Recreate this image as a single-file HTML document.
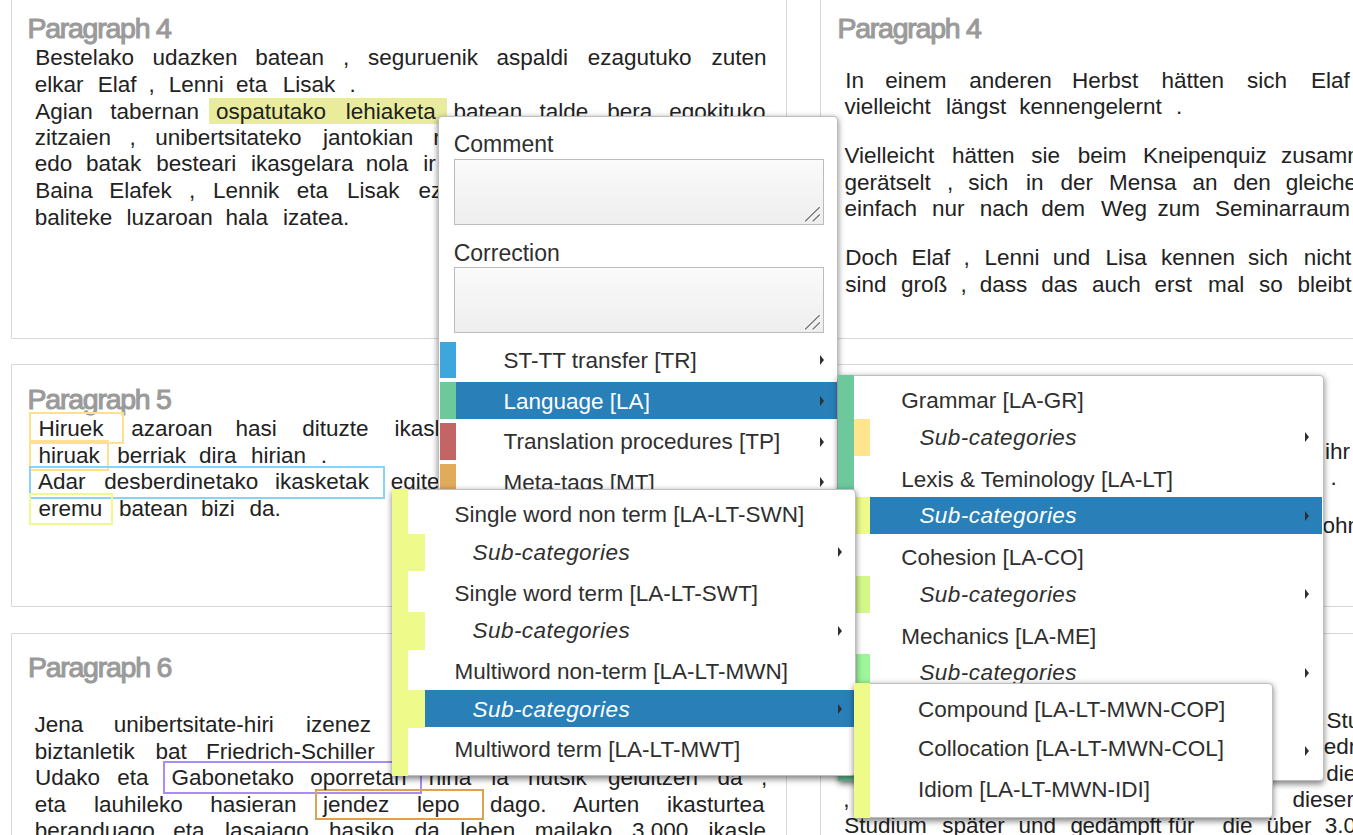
<!DOCTYPE html>
<html><head><meta charset="utf-8"><style>
html,body{margin:0;padding:0;width:1353px;height:835px;overflow:hidden;background:#fff;position:relative}
body{font-family:"Liberation Sans",sans-serif}
.w{position:absolute;white-space:pre;font-family:"Liberation Sans",sans-serif}
</style></head><body>
<div style="position:absolute;left:10.6px;top:-6.0px;width:776.0px;height:344.5px;border:1px solid #d8d8d8;box-sizing:border-box;border-radius:1px"></div>
<div style="position:absolute;left:10.6px;top:364.3px;width:776.0px;height:242.8px;border:1px solid #d8d8d8;box-sizing:border-box;border-radius:1px"></div>
<div style="position:absolute;left:10.6px;top:632.9px;width:776.0px;height:300.0px;border:1px solid #d8d8d8;box-sizing:border-box;border-radius:1px"></div>
<div style="position:absolute;left:820.0px;top:-6.0px;width:776.0px;height:344.5px;border:1px solid #d8d8d8;box-sizing:border-box;border-radius:1px"></div>
<div style="position:absolute;left:820.0px;top:364.3px;width:776.0px;height:242.8px;border:1px solid #d8d8d8;box-sizing:border-box;border-radius:1px"></div>
<div style="position:absolute;left:820.0px;top:632.9px;width:776.0px;height:300.0px;border:1px solid #d8d8d8;box-sizing:border-box;border-radius:1px"></div>
<span class="w" style="left:27.4px;top:13.8px;font-size:28.5px;line-height:28.5px;color:#9a9a9a;letter-spacing:-1.25px;-webkit-text-stroke:1.05px #9a9a9a;">Paragraph 4</span>
<span class="w" style="left:27.6px;top:385.1px;font-size:28.5px;line-height:28.5px;color:#9a9a9a;letter-spacing:-1.25px;-webkit-text-stroke:1.05px #9a9a9a;">Paragraph 5</span>
<span class="w" style="left:27.9px;top:653.3px;font-size:28.5px;line-height:28.5px;color:#9a9a9a;letter-spacing:-1.25px;-webkit-text-stroke:1.05px #9a9a9a;">Paragraph 6</span>
<span class="w" style="left:837.5px;top:13.8px;font-size:28.5px;line-height:28.5px;color:#9a9a9a;letter-spacing:-1.25px;-webkit-text-stroke:1.05px #9a9a9a;">Paragraph 4</span>
<div style="position:absolute;left:209.4px;top:98.0px;width:237.3px;height:26.3px;background:#e9ed9b"></div>
<div style="position:absolute;left:29.0px;top:412.4px;width:95.2px;height:31.9px;border:2px solid #ffe08c;box-sizing:border-box"></div>
<div style="position:absolute;left:29.0px;top:439.5px;width:80.2px;height:31.4px;border:2px solid #ffe08c;box-sizing:border-box"></div>
<div style="position:absolute;left:29.0px;top:465.9px;width:356.0px;height:32.9px;border:2px solid #88d4f8;box-sizing:border-box"></div>
<div style="position:absolute;left:29.0px;top:493.4px;width:83.8px;height:31.9px;border:2px solid #eefa8c;box-sizing:border-box"></div>
<div style="position:absolute;left:162.6px;top:761.4px;width:259.9px;height:32.3px;border:2px solid #a98cfa;box-sizing:border-box"></div>
<div style="position:absolute;left:315.2px;top:789.0px;width:168.6px;height:31.0px;border:2px solid #dca24e;box-sizing:border-box"></div>
<span class="w" style="left:35.2px;top:47.1px;font-size:22.5px;line-height:22.5px;color:#222;">Bestelako</span>
<span class="w" style="left:152.4px;top:47.1px;font-size:22.5px;line-height:22.5px;color:#222;">udazken</span>
<span class="w" style="left:255.2px;top:47.1px;font-size:22.5px;line-height:22.5px;color:#222;">batean</span>
<span class="w" style="left:342.9px;top:47.1px;font-size:22.5px;line-height:22.5px;color:#222;">,</span>
<span class="w" style="left:367.9px;top:47.1px;font-size:22.5px;line-height:22.5px;color:#222;">seguruenik</span>
<span class="w" style="left:496.6px;top:47.1px;font-size:22.5px;line-height:22.5px;color:#222;">aspaldi</span>
<span class="w" style="left:587.7px;top:47.1px;font-size:22.5px;line-height:22.5px;color:#222;">ezagutuko</span>
<span class="w" style="left:711.6px;top:47.1px;font-size:22.5px;line-height:22.5px;color:#222;">zuten</span>
<span class="w" style="left:34.8px;top:73.8px;font-size:22.5px;line-height:22.5px;color:#222;">elkar</span>
<span class="w" style="left:97.7px;top:73.8px;font-size:22.5px;line-height:22.5px;color:#222;">Elaf</span>
<span class="w" style="left:148.6px;top:73.8px;font-size:22.5px;line-height:22.5px;color:#222;">,</span>
<span class="w" style="left:168.8px;top:73.8px;font-size:22.5px;line-height:22.5px;color:#222;">Lenni</span>
<span class="w" style="left:236.0px;top:73.8px;font-size:22.5px;line-height:22.5px;color:#222;">eta</span>
<span class="w" style="left:282.7px;top:73.8px;font-size:22.5px;line-height:22.5px;color:#222;">Lisak</span>
<span class="w" style="left:349.6px;top:73.8px;font-size:22.5px;line-height:22.5px;color:#222;">.</span>
<span class="w" style="left:35.2px;top:100.5px;font-size:22.5px;line-height:22.5px;color:#222;">Agian</span>
<span class="w" style="left:110.2px;top:100.5px;font-size:22.5px;line-height:22.5px;color:#222;">tabernan</span>
<span class="w" style="left:215.9px;top:100.5px;font-size:22.5px;line-height:22.5px;color:#222;">ospatutako</span>
<span class="w" style="left:345.8px;top:100.5px;font-size:22.5px;line-height:22.5px;color:#222;">lehiaketa</span>
<span class="w" style="left:453.4px;top:100.5px;font-size:22.5px;line-height:22.5px;color:#222;">batean</span>
<span class="w" style="left:539.6px;top:100.5px;font-size:22.5px;line-height:22.5px;color:#222;">talde</span>
<span class="w" style="left:607.3px;top:100.5px;font-size:22.5px;line-height:22.5px;color:#222;">bera</span>
<span class="w" style="left:669.3px;top:100.5px;font-size:22.5px;line-height:22.5px;color:#222;">egokituko</span>
<span class="w" style="left:34.8px;top:127.2px;font-size:22.5px;line-height:22.5px;color:#222;">zitzaien</span>
<span class="w" style="left:129.4px;top:127.2px;font-size:22.5px;line-height:22.5px;color:#222;">,</span>
<span class="w" style="left:155.3px;top:127.2px;font-size:22.5px;line-height:22.5px;color:#222;">unibertsitateko</span>
<span class="w" style="left:323.1px;top:127.2px;font-size:22.5px;line-height:22.5px;color:#222;">jantokian</span>
<span class="w" style="left:433.3px;top:127.2px;font-size:22.5px;line-height:22.5px;color:#222;">r</span>
<span class="w" style="left:34.8px;top:153.1px;font-size:22.5px;line-height:22.5px;color:#222;">edo</span>
<span class="w" style="left:86.1px;top:153.1px;font-size:22.5px;line-height:22.5px;color:#222;">batak</span>
<span class="w" style="left:156.3px;top:153.1px;font-size:22.5px;line-height:22.5px;color:#222;">besteari</span>
<span class="w" style="left:250.9px;top:153.1px;font-size:22.5px;line-height:22.5px;color:#222;">ikasgelara</span>
<span class="w" style="left:365.8px;top:153.1px;font-size:22.5px;line-height:22.5px;color:#222;">nola</span>
<span class="w" style="left:423.2px;top:153.1px;font-size:22.5px;line-height:22.5px;color:#222;">ir</span>
<span class="w" style="left:35.2px;top:180.0px;font-size:22.5px;line-height:22.5px;color:#222;">Baina</span>
<span class="w" style="left:109.2px;top:180.0px;font-size:22.5px;line-height:22.5px;color:#222;">Elafek</span>
<span class="w" style="left:189.0px;top:180.0px;font-size:22.5px;line-height:22.5px;color:#222;">,</span>
<span class="w" style="left:213.0px;top:180.0px;font-size:22.5px;line-height:22.5px;color:#222;">Lennik</span>
<span class="w" style="left:296.7px;top:180.0px;font-size:22.5px;line-height:22.5px;color:#222;">eta</span>
<span class="w" style="left:347.1px;top:180.0px;font-size:22.5px;line-height:22.5px;color:#222;">Lisak</span>
<span class="w" style="left:418.5px;top:180.0px;font-size:22.5px;line-height:22.5px;color:#222;">ez</span>
<span class="w" style="left:34.8px;top:206.9px;font-size:22.5px;line-height:22.5px;color:#222;">baliteke</span>
<span class="w" style="left:126.5px;top:206.9px;font-size:22.5px;line-height:22.5px;color:#222;">luzaroan</span>
<span class="w" style="left:225.5px;top:206.9px;font-size:22.5px;line-height:22.5px;color:#222;">hala</span>
<span class="w" style="left:282.9px;top:206.9px;font-size:22.5px;line-height:22.5px;color:#222;">izatea.</span>
<span class="w" style="left:38.5px;top:418.0px;font-size:22.5px;line-height:22.5px;color:#222;">Hiruek</span>
<span class="w" style="left:131.3px;top:418.0px;font-size:22.5px;line-height:22.5px;color:#222;">azaroan</span>
<span class="w" style="left:235.5px;top:418.0px;font-size:22.5px;line-height:22.5px;color:#222;">hasi</span>
<span class="w" style="left:302.2px;top:418.0px;font-size:22.5px;line-height:22.5px;color:#222;">dituzte</span>
<span class="w" style="left:394.6px;top:418.0px;font-size:22.5px;line-height:22.5px;color:#222;">ikasle</span>
<span class="w" style="left:38.5px;top:444.5px;font-size:22.5px;line-height:22.5px;color:#222;">hiruak</span>
<span class="w" style="left:117.3px;top:444.5px;font-size:22.5px;line-height:22.5px;color:#222;">berriak</span>
<span class="w" style="left:199.1px;top:444.5px;font-size:22.5px;line-height:22.5px;color:#222;">dira</span>
<span class="w" style="left:251.0px;top:444.5px;font-size:22.5px;line-height:22.5px;color:#222;">hirian</span>
<span class="w" style="left:320.8px;top:444.5px;font-size:22.5px;line-height:22.5px;color:#222;">.</span>
<span class="w" style="left:37.9px;top:470.8px;font-size:22.5px;line-height:22.5px;color:#222;">Adar</span>
<span class="w" style="left:104.3px;top:470.8px;font-size:22.5px;line-height:22.5px;color:#222;">desberdinetako</span>
<span class="w" style="left:275.1px;top:470.8px;font-size:22.5px;line-height:22.5px;color:#222;">ikasketak</span>
<span class="w" style="left:390.7px;top:470.8px;font-size:22.5px;line-height:22.5px;color:#222;">egiten</span>
<span class="w" style="left:38.5px;top:498.0px;font-size:22.5px;line-height:22.5px;color:#222;">eremu</span>
<span class="w" style="left:118.9px;top:498.0px;font-size:22.5px;line-height:22.5px;color:#222;">batean</span>
<span class="w" style="left:201.1px;top:498.0px;font-size:22.5px;line-height:22.5px;color:#222;">bizi</span>
<span class="w" style="left:249.5px;top:498.0px;font-size:22.5px;line-height:22.5px;color:#222;">da.</span>
<span class="w" style="left:34.4px;top:714.2px;font-size:22.5px;line-height:22.5px;color:#222;">Jena</span>
<span class="w" style="left:113.8px;top:714.2px;font-size:22.5px;line-height:22.5px;color:#222;">unibertsitate-hiri</span>
<span class="w" style="left:305.9px;top:714.2px;font-size:22.5px;line-height:22.5px;color:#222;">izenez</span>
<span class="w" style="left:34.7px;top:740.7px;font-size:22.5px;line-height:22.5px;color:#222;">biztanletik</span>
<span class="w" style="left:155.4px;top:740.7px;font-size:22.5px;line-height:22.5px;color:#222;">bat</span>
<span class="w" style="left:206.0px;top:740.7px;font-size:22.5px;line-height:22.5px;color:#222;">Friedrich-Schiller</span>
<span class="w" style="left:34.9px;top:767.2px;font-size:22.5px;line-height:22.5px;color:#222;">Udako</span>
<span class="w" style="left:117.2px;top:767.2px;font-size:22.5px;line-height:22.5px;color:#222;">eta</span>
<span class="w" style="left:171.4px;top:767.2px;font-size:22.5px;line-height:22.5px;color:#222;">Gabonetako</span>
<span class="w" style="left:310.3px;top:767.2px;font-size:22.5px;line-height:22.5px;color:#222;">oporretan</span>
<span class="w" style="left:428.8px;top:767.2px;font-size:22.5px;line-height:22.5px;color:#222;">hiria</span>
<span class="w" style="left:491.3px;top:767.2px;font-size:22.5px;line-height:22.5px;color:#222;">ia</span>
<span class="w" style="left:528.1px;top:767.2px;font-size:22.5px;line-height:22.5px;color:#222;">hutsik</span>
<span class="w" style="left:608.0px;top:767.2px;font-size:22.5px;line-height:22.5px;color:#222;">gelditzen</span>
<span class="w" style="left:717.4px;top:767.2px;font-size:22.5px;line-height:22.5px;color:#222;">da</span>
<span class="w" style="left:760.9px;top:767.2px;font-size:22.5px;line-height:22.5px;color:#222;">,</span>
<span class="w" style="left:34.7px;top:793.6px;font-size:22.5px;line-height:22.5px;color:#222;">eta</span>
<span class="w" style="left:93.9px;top:793.6px;font-size:22.5px;line-height:22.5px;color:#222;">lauhileko</span>
<span class="w" style="left:210.2px;top:793.6px;font-size:22.5px;line-height:22.5px;color:#222;">hasieran</span>
<span class="w" style="left:323.0px;top:793.6px;font-size:22.5px;line-height:22.5px;color:#222;">jendez</span>
<span class="w" style="left:417.1px;top:793.6px;font-size:22.5px;line-height:22.5px;color:#222;">lepo</span>
<span class="w" style="left:490.1px;top:793.6px;font-size:22.5px;line-height:22.5px;color:#222;">dago.</span>
<span class="w" style="left:573.1px;top:793.6px;font-size:22.5px;line-height:22.5px;color:#222;">Aurten</span>
<span class="w" style="left:667.0px;top:793.6px;font-size:22.5px;line-height:22.5px;color:#222;">ikasturtea</span>
<span class="w" style="left:34.7px;top:820.2px;font-size:22.5px;line-height:22.5px;color:#222;">beranduago</span>
<span class="w" style="left:173.3px;top:820.2px;font-size:22.5px;line-height:22.5px;color:#222;">eta</span>
<span class="w" style="left:225.0px;top:820.2px;font-size:22.5px;line-height:22.5px;color:#222;">lasaiago</span>
<span class="w" style="left:328.9px;top:820.2px;font-size:22.5px;line-height:22.5px;color:#222;">hasiko</span>
<span class="w" style="left:414.8px;top:820.2px;font-size:22.5px;line-height:22.5px;color:#222;">da</span>
<span class="w" style="left:460.3px;top:820.2px;font-size:22.5px;line-height:22.5px;color:#222;">lehen</span>
<span class="w" style="left:534.8px;top:820.2px;font-size:22.5px;line-height:22.5px;color:#222;">mailako</span>
<span class="w" style="left:632.0px;top:820.2px;font-size:22.5px;line-height:22.5px;color:#222;">3.000</span>
<span class="w" style="left:708.6px;top:820.2px;font-size:22.5px;line-height:22.5px;color:#222;">ikasle</span>
<span class="w" style="left:845.2px;top:69.6px;font-size:22.5px;line-height:22.5px;color:#222;">In</span>
<span class="w" style="left:885.2px;top:69.6px;font-size:22.5px;line-height:22.5px;color:#222;">einem</span>
<span class="w" style="left:969.2px;top:69.6px;font-size:22.5px;line-height:22.5px;color:#222;">anderen</span>
<span class="w" style="left:1072.0px;top:69.6px;font-size:22.5px;line-height:22.5px;color:#222;">Herbst</span>
<span class="w" style="left:1161.4px;top:69.6px;font-size:22.5px;line-height:22.5px;color:#222;">hätten</span>
<span class="w" style="left:1246.9px;top:69.6px;font-size:22.5px;line-height:22.5px;color:#222;">sich</span>
<span class="w" style="left:1311.1px;top:69.6px;font-size:22.5px;line-height:22.5px;color:#222;">Elaf</span>
<span class="w" style="left:844.5px;top:95.6px;font-size:22.5px;line-height:22.5px;color:#222;">vielleicht</span>
<span class="w" style="left:946.1px;top:95.6px;font-size:22.5px;line-height:22.5px;color:#222;">längst</span>
<span class="w" style="left:1019.2px;top:95.6px;font-size:22.5px;line-height:22.5px;color:#222;">kennengelernt</span>
<span class="w" style="left:1176.0px;top:95.6px;font-size:22.5px;line-height:22.5px;color:#222;">.</span>
<span class="w" style="left:844.5px;top:144.9px;font-size:22.5px;line-height:22.5px;color:#222;">Vielleicht</span>
<span class="w" style="left:951.9px;top:144.9px;font-size:22.5px;line-height:22.5px;color:#222;">hätten</span>
<span class="w" style="left:1031.2px;top:144.9px;font-size:22.5px;line-height:22.5px;color:#222;">sie</span>
<span class="w" style="left:1077.7px;top:144.9px;font-size:22.5px;line-height:22.5px;color:#222;">beim</span>
<span class="w" style="left:1142.9px;top:144.9px;font-size:22.5px;line-height:22.5px;color:#222;">Kneipenquiz</span>
<span class="w" style="left:1281.0px;top:144.9px;font-size:22.5px;line-height:22.5px;color:#222;">zusammen</span>
<span class="w" style="left:844.5px;top:171.6px;font-size:22.5px;line-height:22.5px;color:#222;">gerätselt</span>
<span class="w" style="left:947.1px;top:171.6px;font-size:22.5px;line-height:22.5px;color:#222;">,</span>
<span class="w" style="left:968.2px;top:171.6px;font-size:22.5px;line-height:22.5px;color:#222;">sich</span>
<span class="w" style="left:1025.9px;top:171.6px;font-size:22.5px;line-height:22.5px;color:#222;">in</span>
<span class="w" style="left:1060.5px;top:171.6px;font-size:22.5px;line-height:22.5px;color:#222;">der</span>
<span class="w" style="left:1108.9px;top:171.6px;font-size:22.5px;line-height:22.5px;color:#222;">Mensa</span>
<span class="w" style="left:1192.5px;top:171.6px;font-size:22.5px;line-height:22.5px;color:#222;">an</span>
<span class="w" style="left:1233.3px;top:171.6px;font-size:22.5px;line-height:22.5px;color:#222;">den</span>
<span class="w" style="left:1285.8px;top:171.6px;font-size:22.5px;line-height:22.5px;color:#222;">gleichen</span>
<span class="w" style="left:844.5px;top:197.6px;font-size:22.5px;line-height:22.5px;color:#222;">einfach</span>
<span class="w" style="left:932.1px;top:197.6px;font-size:22.5px;line-height:22.5px;color:#222;">nur</span>
<span class="w" style="left:979.7px;top:197.6px;font-size:22.5px;line-height:22.5px;color:#222;">nach</span>
<span class="w" style="left:1041.2px;top:197.6px;font-size:22.5px;line-height:22.5px;color:#222;">dem</span>
<span class="w" style="left:1101.1px;top:197.6px;font-size:22.5px;line-height:22.5px;color:#222;">Weg</span>
<span class="w" style="left:1157.5px;top:197.6px;font-size:22.5px;line-height:22.5px;color:#222;">zum</span>
<span class="w" style="left:1214.9px;top:197.6px;font-size:22.5px;line-height:22.5px;color:#222;">Seminarraum</span>
<span class="w" style="left:845.2px;top:247.3px;font-size:22.5px;line-height:22.5px;color:#222;">Doch</span>
<span class="w" style="left:911.5px;top:247.3px;font-size:22.5px;line-height:22.5px;color:#222;">Elaf</span>
<span class="w" style="left:963.4px;top:247.3px;font-size:22.5px;line-height:22.5px;color:#222;">,</span>
<span class="w" style="left:984.5px;top:247.3px;font-size:22.5px;line-height:22.5px;color:#222;">Lenni</span>
<span class="w" style="left:1052.8px;top:247.3px;font-size:22.5px;line-height:22.5px;color:#222;">und</span>
<span class="w" style="left:1105.6px;top:247.3px;font-size:22.5px;line-height:22.5px;color:#222;">Lisa</span>
<span class="w" style="left:1161.1px;top:247.3px;font-size:22.5px;line-height:22.5px;color:#222;">kennen</span>
<span class="w" style="left:1248.1px;top:247.3px;font-size:22.5px;line-height:22.5px;color:#222;">sich</span>
<span class="w" style="left:1303.8px;top:247.3px;font-size:22.5px;line-height:22.5px;color:#222;">nicht</span>
<span class="w" style="left:845.2px;top:273.5px;font-size:22.5px;line-height:22.5px;color:#222;">sind</span>
<span class="w" style="left:901.0px;top:273.5px;font-size:22.5px;line-height:22.5px;color:#222;">groß</span>
<span class="w" style="left:960.5px;top:273.5px;font-size:22.5px;line-height:22.5px;color:#222;">,</span>
<span class="w" style="left:979.7px;top:273.5px;font-size:22.5px;line-height:22.5px;color:#222;">dass</span>
<span class="w" style="left:1041.2px;top:273.5px;font-size:22.5px;line-height:22.5px;color:#222;">das</span>
<span class="w" style="left:1092.1px;top:273.5px;font-size:22.5px;line-height:22.5px;color:#222;">auch</span>
<span class="w" style="left:1154.6px;top:273.5px;font-size:22.5px;line-height:22.5px;color:#222;">erst</span>
<span class="w" style="left:1207.9px;top:273.5px;font-size:22.5px;line-height:22.5px;color:#222;">mal</span>
<span class="w" style="left:1258.9px;top:273.5px;font-size:22.5px;line-height:22.5px;color:#222;">so</span>
<span class="w" style="left:1297.6px;top:273.5px;font-size:22.5px;line-height:22.5px;color:#222;">bleibt</span>
<span class="w" style="left:1325.0px;top:440.7px;font-size:22.5px;line-height:22.5px;color:#222;">ihr</span>
<span class="w" style="left:1330.5px;top:467.4px;font-size:22.5px;line-height:22.5px;color:#222;">.</span>
<span class="w" style="left:1322.5px;top:515.0px;font-size:22.5px;line-height:22.5px;color:#222;">ohne</span>
<span class="w" style="left:1326.5px;top:709.9px;font-size:22.5px;line-height:22.5px;color:#222;">Studium</span>
<span class="w" style="left:1323.8px;top:736.3px;font-size:22.5px;line-height:22.5px;color:#222;">edrich</span>
<span class="w" style="left:1326.3px;top:763.2px;font-size:22.5px;line-height:22.5px;color:#222;">dieser</span>
<span class="w" style="left:843.3px;top:789.4px;font-size:22.5px;line-height:22.5px;color:#222;">,</span>
<span class="w" style="left:1292.6px;top:789.4px;font-size:22.5px;line-height:22.5px;color:#222;">dieser</span>
<span class="w" style="left:844.3px;top:814.5px;font-size:22.5px;line-height:22.5px;color:#222;">Studium</span>
<span class="w" style="left:942.2px;top:814.5px;font-size:22.5px;line-height:22.5px;color:#222;">später</span>
<span class="w" style="left:1018.5px;top:814.5px;font-size:22.5px;line-height:22.5px;color:#222;">und</span>
<span class="w" style="left:1070.5px;top:814.5px;font-size:22.5px;line-height:22.5px;color:#222;"><span style="letter-spacing:-0.4px">gedämpft</span></span>
<span class="w" style="left:1168.2px;top:814.5px;font-size:22.5px;line-height:22.5px;color:#222;">für</span>
<span class="w" style="left:1222.6px;top:814.5px;font-size:22.5px;line-height:22.5px;color:#222;">die</span>
<span class="w" style="left:1266.4px;top:814.5px;font-size:22.5px;line-height:22.5px;color:#222;">über</span>
<span class="w" style="left:1324.7px;top:814.5px;font-size:22.5px;line-height:22.5px;color:#222;">3.000</span>
<div style="position:absolute;left:0;top:0;z-index:1">
<div style="position:absolute;left:437.9px;top:116.1px;width:400.1px;height:420.0px;background:#fff;border:1px solid #bebebe;box-sizing:border-box;border-radius:4px;box-shadow:0 2.5px 6px rgba(0,0,0,.5);"></div>
<span class="w" style="left:453.7px;top:132.8px;font-size:23px;line-height:23px;color:#2f2f2f;">Comment</span>
<div style="position:absolute;left:454.2px;top:159.0px;width:369.6px;height:66.2px;border:1px solid #bcbcbc;box-sizing:border-box;background:linear-gradient(#fafafa,#eeeeee)"></div>
<span class="w" style="left:453.7px;top:241.8px;font-size:23px;line-height:23px;color:#2f2f2f;">Correction</span>
<div style="position:absolute;left:454.2px;top:267.0px;width:369.6px;height:66.2px;border:1px solid #bcbcbc;box-sizing:border-box;background:linear-gradient(#fafafa,#eeeeee)"></div>
<svg style="position:absolute;left:800px;top:199.5px" width="24" height="26" viewBox="0 0 24 26"><path d="M5.5 21.1 L19.3 7.4 M13 21.1 L19.5 14.8" stroke="#fff" stroke-width="3.2" stroke-linecap="round" opacity=".8"/><path d="M5.5 21.1 L19.3 7.4 M13 21.1 L19.5 14.8" stroke="#777" stroke-width="1.4" stroke-linecap="round"/></svg>
<svg style="position:absolute;left:800px;top:307.5px" width="24" height="26" viewBox="0 0 24 26"><path d="M5.5 21.1 L19.3 7.4 M13 21.1 L19.5 14.8" stroke="#fff" stroke-width="3.2" stroke-linecap="round" opacity=".8"/><path d="M5.5 21.1 L19.3 7.4 M13 21.1 L19.5 14.8" stroke="#777" stroke-width="1.4" stroke-linecap="round"/></svg>
<div style="position:absolute;left:439.5px;top:341.6px;width:16.5px;height:36.6px;background:#3ba7dd"></div>
<span class="w" style="left:503.5px;top:349.8px;font-size:22.5px;line-height:22.5px;color:#2f2f2f;">ST-TT transfer [TR]</span>
<div style="position:absolute;left:819.7px;top:354.9px;width:0;height:0;border-style:solid;border-width:5.7px 0 5.7px 4.8px;border-color:transparent transparent transparent #2f2f2f"></div>
<div style="position:absolute;left:439.5px;top:382.4px;width:16.5px;height:36.6px;background:#6dc89b"></div>
<div style="position:absolute;left:456.0px;top:382.4px;width:381.0px;height:36.6px;background:#2980b9"></div>
<span class="w" style="left:503.5px;top:390.6px;font-size:22.5px;line-height:22.5px;color:#fff;">Language [LA]</span>
<div style="position:absolute;left:819.7px;top:395.7px;width:0;height:0;border-style:solid;border-width:5.7px 0 5.7px 4.8px;border-color:transparent transparent transparent #2f2f2f"></div>
<div style="position:absolute;left:439.5px;top:423.2px;width:16.5px;height:36.6px;background:#c46565"></div>
<span class="w" style="left:503.5px;top:431.4px;font-size:22.5px;line-height:22.5px;color:#2f2f2f;">Translation procedures [TP]</span>
<div style="position:absolute;left:819.7px;top:436.5px;width:0;height:0;border-style:solid;border-width:5.7px 0 5.7px 4.8px;border-color:transparent transparent transparent #2f2f2f"></div>
<div style="position:absolute;left:439.5px;top:464.0px;width:16.5px;height:36.6px;background:#e0ac5c"></div>
<span class="w" style="left:503.5px;top:472.2px;font-size:22.5px;line-height:22.5px;color:#2f2f2f;">Meta-tags [MT]</span>
<div style="position:absolute;left:819.7px;top:477.3px;width:0;height:0;border-style:solid;border-width:5.7px 0 5.7px 4.8px;border-color:transparent transparent transparent #2f2f2f"></div>
<div style="position:absolute;left:439.5px;top:504.8px;width:16.5px;height:36.6px;background:#999"></div>
<span class="w" style="left:503.5px;top:513.0px;font-size:22.5px;line-height:22.5px;color:#2f2f2f;">Other [OT]</span>
<div style="position:absolute;left:819.7px;top:518.1px;width:0;height:0;border-style:solid;border-width:5.7px 0 5.7px 4.8px;border-color:transparent transparent transparent #2f2f2f"></div>
</div>
<div style="position:absolute;left:0;top:0;z-index:2">
<div style="position:absolute;left:838.0px;top:375.0px;width:485.5px;height:406.0px;background:#fff;border:1px solid #bebebe;box-sizing:border-box;border-radius:4px;box-shadow:0 2.5px 6px rgba(0,0,0,.5);"></div>
<div style="position:absolute;left:838.0px;top:375.0px;width:16.0px;height:406.0px;background:#6dc89b"></div>
<span class="w" style="left:901.2px;top:390.4px;font-size:22.5px;line-height:22.5px;color:#2f2f2f;">Grammar [LA-GR]</span>
<div style="position:absolute;left:854.0px;top:418.8px;width:16.2px;height:37.0px;background:#ffe68e"></div>
<span class="w" style="left:919.4px;top:426.8px;font-size:22.5px;line-height:22.5px;color:#2f2f2f;font-style:italic;letter-spacing:0.45px">Sub-categories</span>
<div style="position:absolute;left:1305.4px;top:432.1px;width:0;height:0;border-style:solid;border-width:5.7px 0 5.7px 4.8px;border-color:transparent transparent transparent #2f2f2f"></div>
<span class="w" style="left:901.2px;top:468.9px;font-size:22.5px;line-height:22.5px;color:#2f2f2f;">Lexis &amp; Teminology [LA-LT]</span>
<div style="position:absolute;left:854.0px;top:497.3px;width:16.2px;height:37.0px;background:#eefa8a"></div>
<div style="position:absolute;left:870.2px;top:497.3px;width:452.3px;height:36.6px;background:#2980b9"></div>
<span class="w" style="left:919.4px;top:505.3px;font-size:22.5px;line-height:22.5px;color:#fff;font-style:italic;letter-spacing:0.45px">Sub-categories</span>
<div style="position:absolute;left:1305.4px;top:510.6px;width:0;height:0;border-style:solid;border-width:5.7px 0 5.7px 4.8px;border-color:transparent transparent transparent #2f2f2f"></div>
<span class="w" style="left:901.2px;top:547.4px;font-size:22.5px;line-height:22.5px;color:#2f2f2f;">Cohesion [LA-CO]</span>
<div style="position:absolute;left:854.0px;top:575.8px;width:16.2px;height:37.0px;background:#d4f78a"></div>
<span class="w" style="left:919.4px;top:583.8px;font-size:22.5px;line-height:22.5px;color:#2f2f2f;font-style:italic;letter-spacing:0.45px">Sub-categories</span>
<div style="position:absolute;left:1305.4px;top:589.1px;width:0;height:0;border-style:solid;border-width:5.7px 0 5.7px 4.8px;border-color:transparent transparent transparent #2f2f2f"></div>
<span class="w" style="left:901.2px;top:625.9px;font-size:22.5px;line-height:22.5px;color:#2f2f2f;">Mechanics [LA-ME]</span>
<div style="position:absolute;left:854.0px;top:654.3px;width:16.2px;height:37.0px;background:#9ef59a"></div>
<span class="w" style="left:919.4px;top:662.3px;font-size:22.5px;line-height:22.5px;color:#2f2f2f;font-style:italic;letter-spacing:0.45px">Sub-categories</span>
<div style="position:absolute;left:1305.4px;top:667.6px;width:0;height:0;border-style:solid;border-width:5.7px 0 5.7px 4.8px;border-color:transparent transparent transparent #2f2f2f"></div>
<span class="w" style="left:901.2px;top:704.4px;font-size:22.5px;line-height:22.5px;color:#2f2f2f;">Style [LA-ST]</span>
<div style="position:absolute;left:854.0px;top:732.8px;width:16.2px;height:37.0px;background:#c9e3f5"></div>
<span class="w" style="left:919.4px;top:740.8px;font-size:22.5px;line-height:22.5px;color:#2f2f2f;font-style:italic;letter-spacing:0.45px">Sub-categories</span>
<div style="position:absolute;left:1305.4px;top:746.1px;width:0;height:0;border-style:solid;border-width:5.7px 0 5.7px 4.8px;border-color:transparent transparent transparent #2f2f2f"></div>
</div>
<div style="position:absolute;left:0;top:0;z-index:3">
<div style="position:absolute;left:392.0px;top:488.9px;width:464.3px;height:287.3px;background:#fff;border:1px solid #bebebe;box-sizing:border-box;border-radius:4px;box-shadow:0 2.5px 6px rgba(0,0,0,.5);"></div>
<div style="position:absolute;left:392.0px;top:488.9px;width:16.4px;height:287.3px;background:#eefa8a"></div>
<span class="w" style="left:454.5px;top:504.2px;font-size:22.5px;line-height:22.5px;color:#2f2f2f;">Single word non term [LA-LT-SWN]</span>
<div style="position:absolute;left:408.4px;top:533.6px;width:16.4px;height:37.5px;background:#eefa8a"></div>
<span class="w" style="left:472.5px;top:542.0px;font-size:22.5px;line-height:22.5px;color:#2f2f2f;font-style:italic;letter-spacing:0.45px">Sub-categories</span>
<div style="position:absolute;left:838.3px;top:547.1px;width:0;height:0;border-style:solid;border-width:5.7px 0 5.7px 4.8px;border-color:transparent transparent transparent #2f2f2f"></div>
<span class="w" style="left:454.5px;top:582.6px;font-size:22.5px;line-height:22.5px;color:#2f2f2f;">Single word term [LA-LT-SWT]</span>
<div style="position:absolute;left:408.4px;top:612.0px;width:16.4px;height:37.5px;background:#eefa8a"></div>
<span class="w" style="left:472.5px;top:620.4px;font-size:22.5px;line-height:22.5px;color:#2f2f2f;font-style:italic;letter-spacing:0.45px">Sub-categories</span>
<div style="position:absolute;left:838.3px;top:625.5px;width:0;height:0;border-style:solid;border-width:5.7px 0 5.7px 4.8px;border-color:transparent transparent transparent #2f2f2f"></div>
<span class="w" style="left:454.5px;top:661.0px;font-size:22.5px;line-height:22.5px;color:#2f2f2f;">Multiword non-term [LA-LT-MWN]</span>
<div style="position:absolute;left:408.4px;top:690.4px;width:16.4px;height:37.5px;background:#eefa8a"></div>
<div style="position:absolute;left:424.8px;top:690.4px;width:430.5px;height:36.6px;background:#2980b9"></div>
<span class="w" style="left:472.5px;top:698.8px;font-size:22.5px;line-height:22.5px;color:#fff;font-style:italic;letter-spacing:0.45px">Sub-categories</span>
<div style="position:absolute;left:838.3px;top:703.9px;width:0;height:0;border-style:solid;border-width:5.7px 0 5.7px 4.8px;border-color:transparent transparent transparent #2f2f2f"></div>
<span class="w" style="left:454.5px;top:739.4px;font-size:22.5px;line-height:22.5px;color:#2f2f2f;">Multiword term [LA-LT-MWT]</span>
</div>
<div style="position:absolute;left:0;top:0;z-index:4">
<div style="position:absolute;left:854.0px;top:682.8px;width:419.4px;height:135.5px;background:#fff;border:1px solid #bebebe;box-sizing:border-box;border-radius:4px;box-shadow:0 2.5px 6px rgba(0,0,0,.5);"></div>
<div style="position:absolute;left:854.0px;top:682.8px;width:16.0px;height:135.5px;background:#eefa8a"></div>
<span class="w" style="left:918.0px;top:698.5px;font-size:22.5px;line-height:22.5px;color:#2f2f2f;">Compound [LA-LT-MWN-COP]</span>
<span class="w" style="left:918.0px;top:738.4px;font-size:22.5px;line-height:22.5px;color:#2f2f2f;">Collocation [LA-LT-MWN-COL]</span>
<span class="w" style="left:918.0px;top:779.4px;font-size:22.5px;line-height:22.5px;color:#2f2f2f;">Idiom [LA-LT-MWN-IDI]</span>
</div>
</body></html>
